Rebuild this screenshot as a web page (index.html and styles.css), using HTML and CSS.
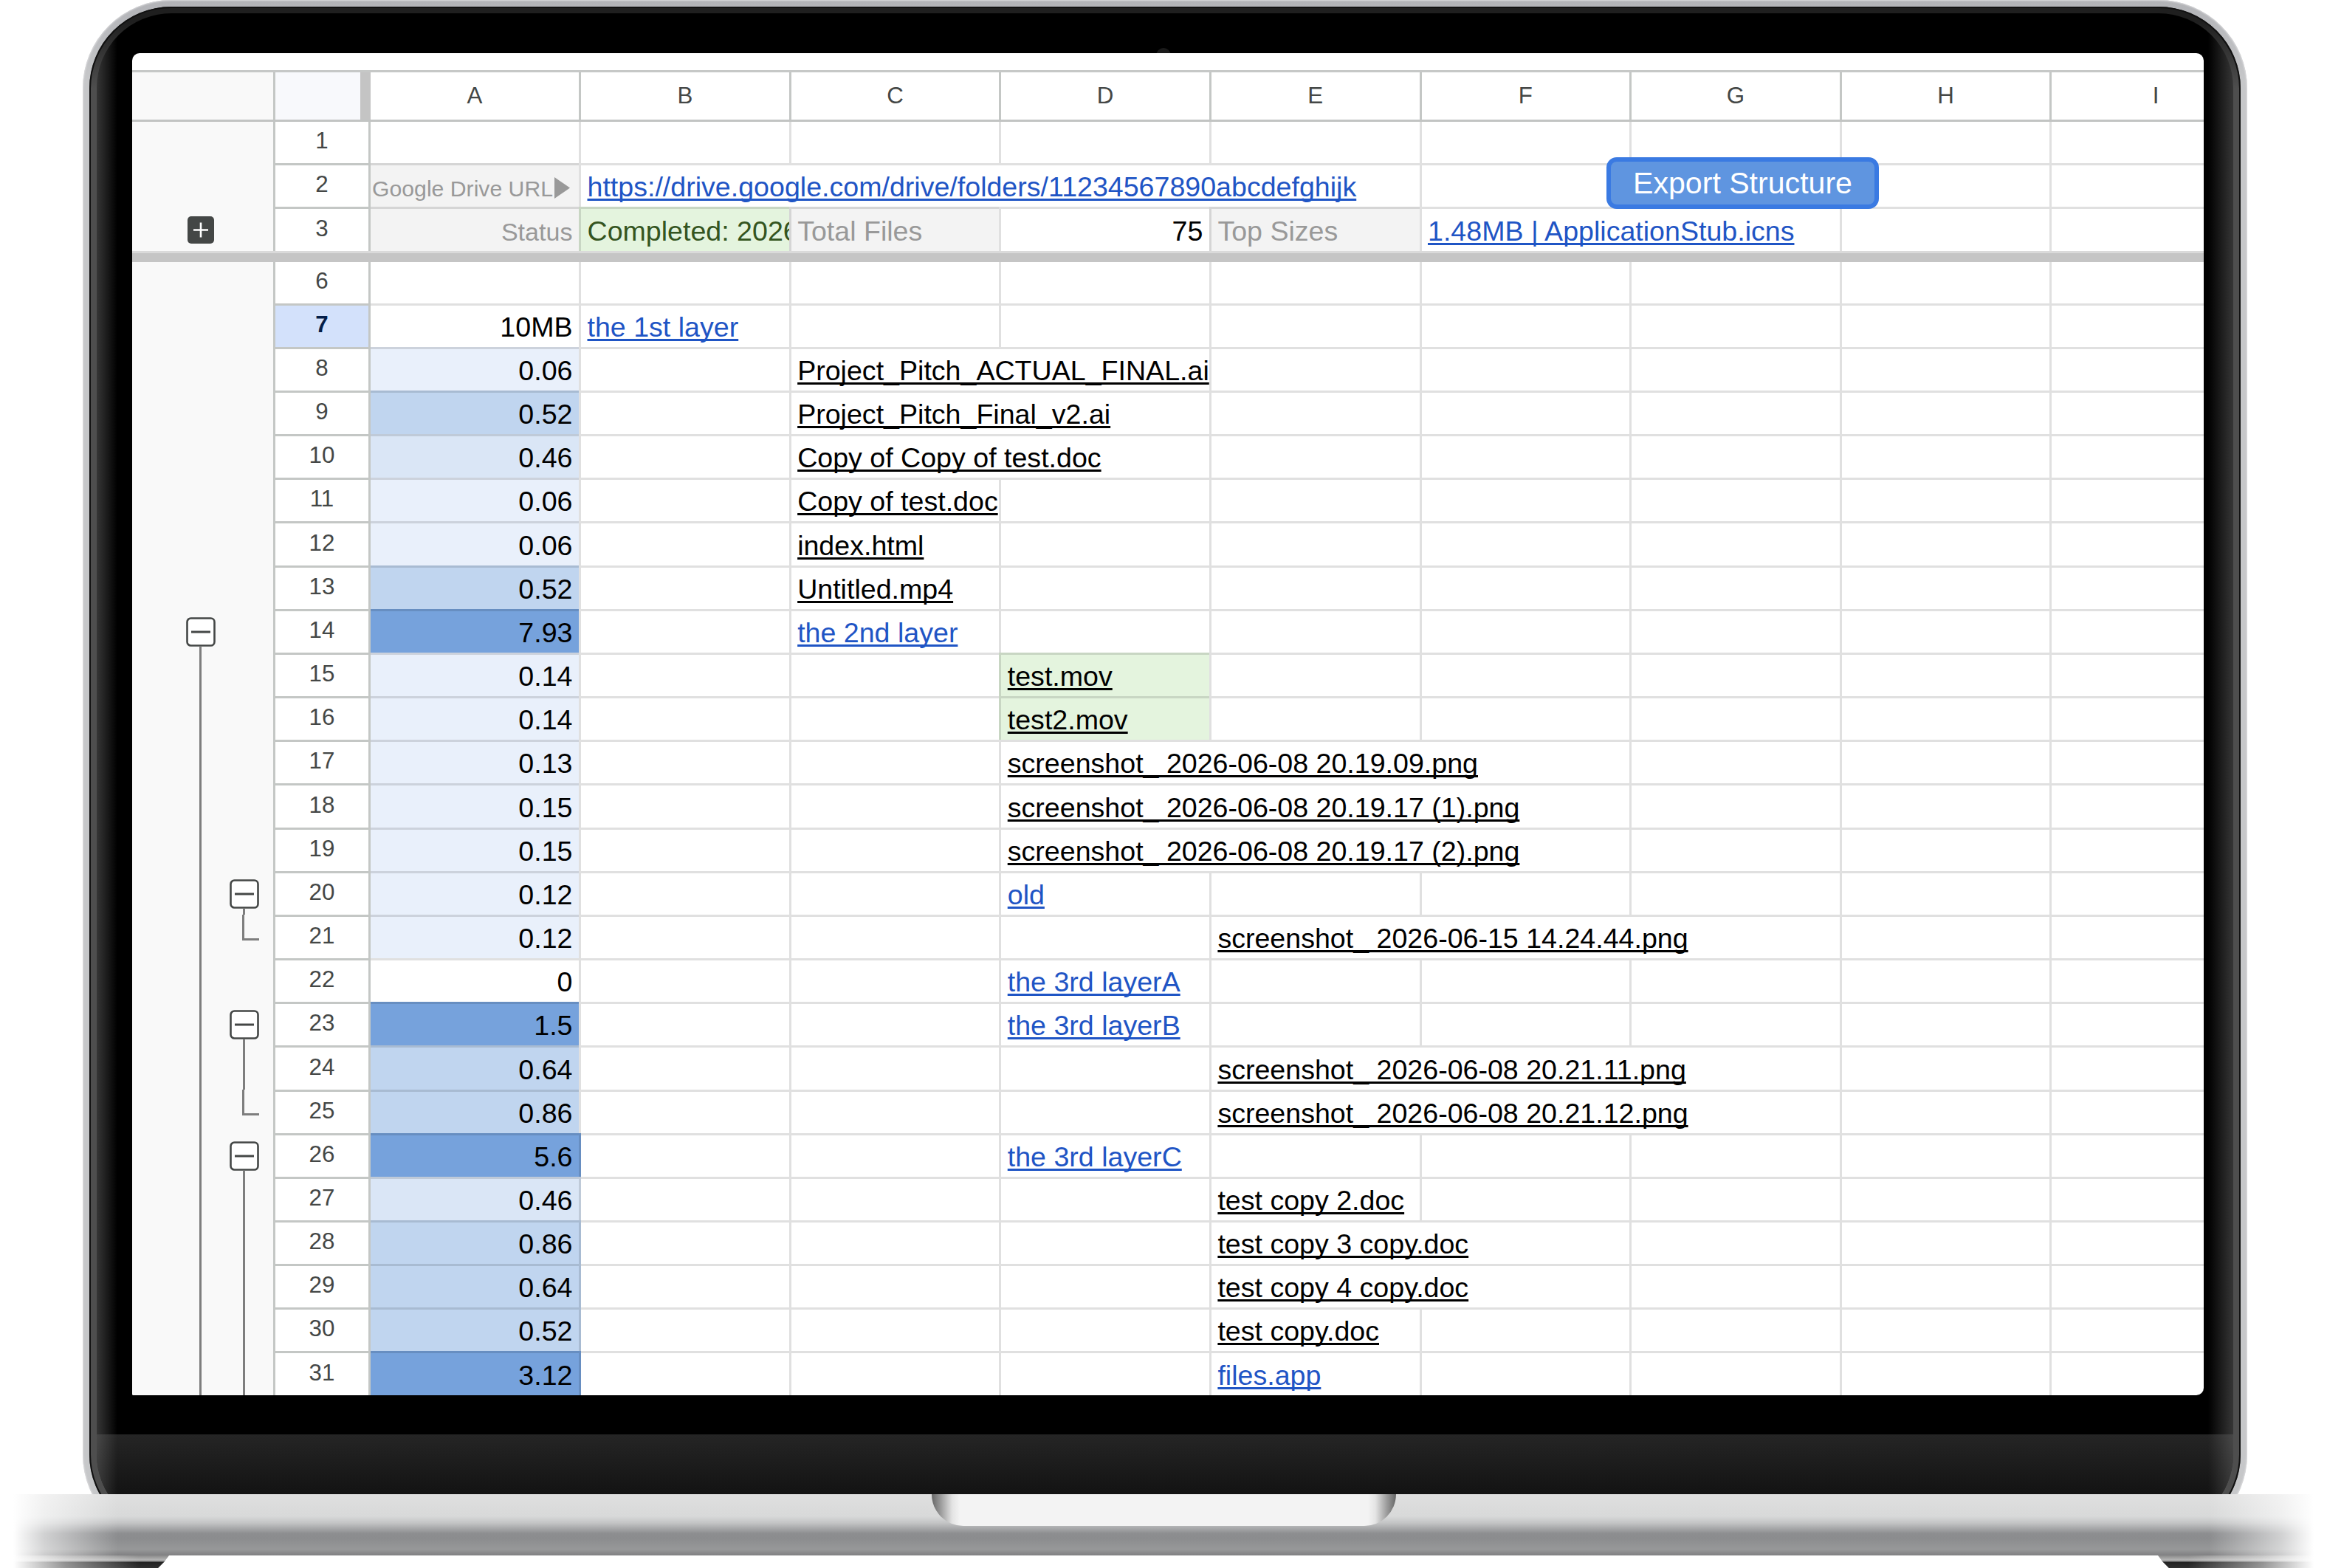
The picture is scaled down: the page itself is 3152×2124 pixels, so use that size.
FILE: index.html
```html
<!DOCTYPE html>
<html lang="en">
<head>
    <meta charset="UTF-8">
    <meta name="viewport" content="width=device-width, initial-scale=1.0">
    <title>Drive Structure</title>
    <link rel="stylesheet" href="styles.css">
</head>
<body>
    <div class="laptop">
        <div class="lid">
            <div class="shell">
                <div class="rim">
                    <div class="bezel">
                        <div class="camera"></div>
                        <div class="screen">
                            <div class="header">
                                <div class="gutter"></div>
                                <div class="corner"></div>
                            </div>
                            <div class="rows" id="frozen"></div>
                            <div class="freeze"></div>
                            <div class="rows" id="rows"></div>
                            <button class="export">Export Structure</button>
                        </div>
                        <div class="chin"></div>
                    </div>
                </div>
            </div>
        </div>
        <div class="base">
            <div class="notch"></div>
        </div>
        <div class="feet">
            <div class="foot"></div>
            <div class="foot right"></div>
        </div>
    </div>
    <script src="script.js"></script>
</body>
</html>
```

FILE: styles.css
```css
* {
    box-sizing: border-box;
}

body {
    margin: 0;
    background: #fff;
    font-family: "Liberation Sans", Arial, sans-serif;
    overflow: hidden;
}

.laptop {
    width: 3152px;
    height: 2124px;
    overflow: hidden;
}

/* lid */
.lid {
    width: 2932px;
    height: 2024px;
    margin-left: 112px;
    overflow: hidden;
}

.shell {
    height: 2090px;
    padding: 9px;
    border-radius: 120px;
    background: linear-gradient(#b2b3b7, #c6c7c9 110px);
    box-shadow: inset 0 0 2px 1px #dcdcde;
}

.rim {
    height: 100%;
    padding: 9px 10px 10px;
    border-radius: 111px;
    background: linear-gradient(#1f1f1f 20px, #4e4e4e 110px);
    box-shadow: inset 0 0 0 2px #111;
}

.bezel {
    display: flex;
    flex-direction: column;
    position: relative;
    height: 100%;
    padding: 54px 40px 0 48px;
    border-radius: 101px;
    overflow: hidden;
    background: linear-gradient(90deg, #363636, #000 28px, #000 2860px, #363636);
}

.camera {
    position: absolute;
    top: 47px;
    left: 1435px;
    width: 20px;
    height: 20px;
    border-radius: 50%;
    background: #1a1a1a;
}

.chin {
    flex: 1;
    margin: 53px -40px 0 -48px;
    background:
        linear-gradient(90deg, rgba(255, 255, 255, 0.16), transparent 28px, transparent 2860px, rgba(255, 255, 255, 0.16)),
        linear-gradient(#252525, #131313 81px);
}

/* spreadsheet */
.screen {
    position: relative;
    height: 1818px;
    padding-top: 23px;
    background: #fff;
    border-radius: 10px 10px 10px 2px;
    overflow: hidden;
}

.header {
    display: flex;
    height: 70px;
    border-top: 3px solid #c6c8c7;
    border-bottom: 3px solid #c2c4c3;
}

.gutter {
    display: flex;
    flex: none;
    width: 191px;
    padding-left: 63px;
    background: #f9f9f9;
}

.corner {
    flex: none;
    width: 132px;
    border-left: 3px solid #c4c7c5;
    border-right: 14px solid #c4c4c4;
    background: #f8f9fc;
}

.letter {
    display: flex;
    flex: none;
    align-items: center;
    justify-content: center;
    width: 284.64px;
    padding-bottom: 1px;
    border-left: 3px solid #c4c7c5;
    color: #444746;
    font-size: 31.3px;
}

.letter.first {
    width: 282px;
    border-left: none;
}

.row {
    display: flex;
    height: 59.17px;
}

.rows .row:first-child {
    height: 56.2px;
}

.rows .row:first-child > .cell,
.rows .row:first-child > .num {
    border-top: none;
}

.num {
    display: flex;
    flex: none;
    align-items: flex-end;
    justify-content: center;
    width: 132px;
    padding-bottom: 12px;
    border: 3px solid #c4c7c5;
    border-bottom: none;
    color: #444746;
    font-size: 31.3px;
}

.num.active {
    background: #d3e1fb;
    color: #041e49;
    font-weight: bold;
}

.cell {
    display: flex;
    flex: none;
    align-items: flex-end;
    width: 284.64px;
    padding: 0 8.5px 6px 8.5px;
    border-top: 3px solid rgba(0, 0, 0, 0.12);
    border-left: 3px solid rgba(0, 0, 0, 0.12);
    overflow: hidden;
    white-space: nowrap;
    font-size: 37.58px;
    line-height: 42px;
}

.cell.first {
    width: 282px;
    border-left: none;
    justify-content: flex-end;
}

/* column A draws its own right line in these rows */
.edge .cell.first {
    width: 285px;
    padding-right: 8.5px;
    border-right: 3px solid rgba(0, 0, 0, 0.12);
}

.edge .cell.first + .cell {
    width: 281.64px;
    border-left: none;
}

.span2 {
    width: 569.28px;
}

.span3 {
    width: 853.92px;
}

.span4 {
    width: 1138.56px;
}

.link {
    color: #1f55c5;
}

.link span,
.file span {
    text-decoration: underline;
    text-decoration-thickness: 3px;
    text-decoration-skip-ink: none;
    text-underline-offset: 3px;
}

.number {
    justify-content: flex-end;
}

.label {
    background: #f3f3f3;
    color: #999;
}

.label.url {
    padding-left: 0;
    padding-right: 12px;
    padding-bottom: 5px;
    font-size: 30.2px;
    line-height: 38px;
}

.label.status {
    font-size: 34.1px;
    line-height: 40px;
}

.url svg {
    flex: none;
    width: 21px;
    height: 29px;
    margin: 0 0 6px 2px;
}

.green {
    background: #e4f4de;
}

.done {
    color: #34541f;
}

.blue1 { background: #e9f0fb; }
.blue2 { background: #dae6f6; }
.blue3 { background: #c0d5ef; }
.blue4 { background: #76a2dc; }

.freeze {
    height: 15px;
    border-top: 3px solid #dadada;
    background: #c5c5c5;
}

/* group toggles on the left */
.lane {
    display: flex;
    flex-direction: column;
    align-items: center;
    width: 59px;
}

.toggle {
    display: block;
    flex: none;
    width: 40px;
    height: 40px;
    margin-top: 11px;
}

.open::after,
.line::after {
    content: "";
    flex: 1;
    width: 3px;
    background: #7e7e7e;
}

.end::after {
    content: "";
    width: 20px;
    height: 32px;
    margin-left: 17px;
    border-left: 3px solid #7e7e7e;
    border-bottom: 3px solid #7e7e7e;
}

.export {
    position: absolute;
    top: 141px;
    left: 1997px;
    width: 369px;
    height: 70px;
    padding: 0;
    border: 6px solid #3a7ae2;
    border-radius: 14px;
    background: #5f95e0;
    color: #fff;
    font-family: inherit;
    font-size: 41.1px;
    white-space: nowrap;
}

/* base */
.base {
    display: flex;
    justify-content: center;
    height: 83px;
    background:
        linear-gradient(90deg, #fff 18px, rgba(255, 255, 255, 0.6) 60px, transparent 160px, transparent 2992px, rgba(255, 255, 255, 0.6) 3090px, #fff 3134px),
        linear-gradient(#dfdfdf, #d8d9d9 36%, #c3c4c5 47%, #8d8e90 64%, #8b8c8e 72%, #979899 90%, #808082);
}

.notch {
    width: 629px;
    height: 43px;
    border-radius: 0 0 43px 43px;
    background: linear-gradient(90deg, #666, #9a9a9a 12px, #e4e4e4 28px, #f3f3f3 38px, #f3f3f3 591px, #e4e4e4 601px, #9a9a9a 617px, #666);
}

.feet {
    display: flex;
    justify-content: space-between;
    height: 17px;
    padding: 0 18px;
}

.foot {
    width: 211px;
    background:
        linear-gradient(90deg, #fff, rgba(255, 255, 255, 0.5) 70px, transparent 170px),
        linear-gradient(#8a8a8a, #b4b4b4 6px, #8a8a8a 8px, #222 9px, #303030);
    clip-path: polygon(0 0, 100% 0, 97% 50%, 93% 100%, 0 100%);
}

.foot.right {
    transform: scaleX(-1);
}
```

FILE: script.js
```js
const letters = ["A", "B", "C", "D", "E", "F", "G", "H", "I"];

const plusIcon = `<svg class="toggle" viewBox="0 0 40 40">
    <rect x="2" y="2" width="36" height="37" rx="5" fill="#444746"/>
    <path d="M10 20.5H30M20 10.5V30.5" stroke="#fff" stroke-width="2.6"/>
</svg>`;

const minusIcon = `<svg class="toggle" viewBox="0 0 40 40">
    <rect x="1.5" y="1.5" width="37" height="37" rx="5" fill="#fff" stroke="#444746" stroke-width="2.6"/>
    <path d="M7 20H33" stroke="#444746" stroke-width="3"/>
</svg>`;

const arrow = `<svg viewBox="0 0 21 29"><path d="M0 0L21 14.5L0 29Z" fill="#999"/></svg>`;

// cells: column letter -> [text, classes, columns the text runs over]
const frozen = [
    { n: 1 },
    { n: 2, A: ["Google Drive URL", "label url"], B: ["https://drive.google.com/drive/folders/11234567890abcdefghijk", "link", 4] },
    {
        n: 3, lanes: ["plus", ""],
        A: ["Status", "label status"],
        B: ["Completed: 2026", "green done"],
        C: ["Total Files", "label"],
        D: ["75", "number"],
        E: ["Top Sizes", "label"],
        F: ["1.48MB | ApplicationStub.icns", "link", 2]
    }
];

const rows = [
    { n: 6 },
    { n: 7, A: ["10MB", ""], B: ["the 1st layer", "link"] },
    { n: 8, A: ["0.06", "blue1"], C: ["Project_Pitch_ACTUAL_FINAL.ai", "file", 2] },
    { n: 9, A: ["0.52", "blue3"], C: ["Project_Pitch_Final_v2.ai", "file", 2] },
    { n: 10, A: ["0.46", "blue2"], C: ["Copy of Copy of test.doc", "file", 2] },
    { n: 11, A: ["0.06", "blue1"], C: ["Copy of test.doc", "file"] },
    { n: 12, A: ["0.06", "blue1"], C: ["index.html", "file"] },
    { n: 13, A: ["0.52", "blue3"], C: ["Untitled.mp4", "file"] },
    { n: 14, lanes: ["open", ""], A: ["7.93", "blue4"], C: ["the 2nd layer", "link"] },
    { n: 15, lanes: ["line", ""], A: ["0.14", "blue1"], D: ["test.mov", "file green"] },
    { n: 16, lanes: ["line", ""], A: ["0.14", "blue1"], D: ["test2.mov", "file green"] },
    { n: 17, lanes: ["line", ""], A: ["0.13", "blue1"], D: ["screenshot_ 2026-06-08 20.19.09.png", "file", 3] },
    { n: 18, lanes: ["line", ""], A: ["0.15", "blue1"], D: ["screenshot_ 2026-06-08 20.19.17 (1).png", "file", 3] },
    { n: 19, lanes: ["line", ""], A: ["0.15", "blue1"], D: ["screenshot_ 2026-06-08 20.19.17 (2).png", "file", 3] },
    { n: 20, lanes: ["line", "open"], A: ["0.12", "blue1"], D: ["old", "link"] },
    { n: 21, lanes: ["line", "end"], A: ["0.12", "blue1"], E: ["screenshot_ 2026-06-15 14.24.44.png", "file", 3] },
    { n: 22, lanes: ["line", ""], A: ["0", ""], D: ["the 3rd layerA", "link"] },
    { n: 23, lanes: ["line", "open"], A: ["1.5", "blue4"], D: ["the 3rd layerB", "link"] },
    { n: 24, lanes: ["line", "line"], A: ["0.64", "blue3"], E: ["screenshot_ 2026-06-08 20.21.11.png", "file", 3] },
    { n: 25, lanes: ["line", "end"], A: ["0.86", "blue3"], E: ["screenshot_ 2026-06-08 20.21.12.png", "file", 3] },
    { n: 26, lanes: ["line", "open"], A: ["5.6", "blue4"], D: ["the 3rd layerC", "link"] },
    { n: 27, lanes: ["line", "line"], A: ["0.46", "blue2"], E: ["test copy 2.doc", "file"] },
    { n: 28, lanes: ["line", "line"], A: ["0.86", "blue3"], E: ["test copy 3 copy.doc", "file", 2] },
    { n: 29, lanes: ["line", "line"], A: ["0.64", "blue3"], E: ["test copy 4 copy.doc", "file", 2] },
    { n: 30, lanes: ["line", "line"], A: ["0.52", "blue3"], E: ["test copy.doc", "file"] },
    { n: 31, lanes: ["line", "line"], A: ["3.12", "blue4"], E: ["files.app", "link"] }
];

function laneHTML(type) {
    let icon = "";
    if (type === "plus") icon = plusIcon;
    if (type === "open") icon = minusIcon;
    return `<div class="lane ${type}">${icon}</div>`;
}

function rowHTML(row) {
    const lanes = (row.lanes || []).map(laneHTML).join("");
    let html = `<div class="gutter">${lanes}</div>`;
    html += `<div class="num ${row.n === 7 ? "active" : ""}">${row.n}</div>`;

    for (let i = 0; i < letters.length; i++) {
        const [text, cls, span] = row[letters[i]] || ["", "", 1];
        const first = i === 0 ? "first" : "";
        const icon = cls === "label url" ? arrow : "";
        html += `<div class="cell ${first} ${cls} ${span > 1 ? "span" + span : ""}"><span>${text}</span>${icon}</div>`;
        if (span > 1) i += span - 1;
    }
    return `<div class="row ${row.n >= 26 ? "edge" : ""}">${html}</div>`;
}

document.querySelector(".header").innerHTML += letters
    .map((letter, i) => `<div class="letter ${i === 0 ? "first" : ""}">${letter}</div>`)
    .join("");
document.getElementById("frozen").innerHTML = frozen.map(rowHTML).join("");
document.getElementById("rows").innerHTML = rows.map(rowHTML).join("");
```
